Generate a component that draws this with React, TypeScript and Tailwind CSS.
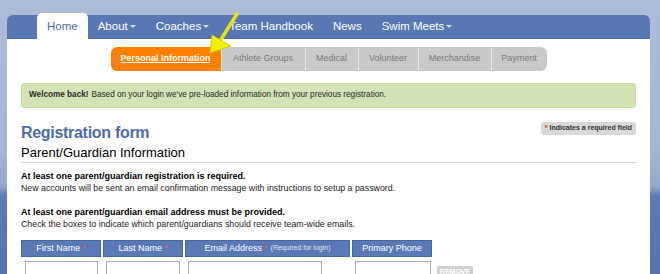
import React from "react";

const Caret = () => (
  <span className="inline-block ml-[2px] align-middle w-0 h-0 border-l-[3px] border-r-[3px] border-t-[3px] border-l-transparent border-r-transparent border-t-[#d3ddf0] relative top-[-1px]" />
);

export default function App() {
  const navItems: { label: string; caret?: boolean }[] = [
    { label: "About", caret: true },
    { label: "Coaches", caret: true },
    { label: "Team Handbook" },
    { label: "News" },
    { label: "Swim Meets", caret: true },
  ];
  const tabs = [
    { label: "Personal Information", w: "w-[110px]" },
    { label: "Athlete Groups", w: "w-[84px]" },
    { label: "Medical", w: "w-[53px]" },
    { label: "Volunteer", w: "w-[60px]" },
    { label: "Merchandise", w: "w-[73px]" },
    { label: "Payment", w: "w-[56px]" },
  ];
  return (
    <div
      className="relative w-[660px] h-[274px] overflow-hidden bg-[linear-gradient(180deg,#aebcd9_0px,#a4b5d5_150px,#94a9ce_186px,#5b7bb6_196px,#5575b2_274px)]"
      style={{ fontFamily: '"Liberation Sans", Arial, sans-serif' }}
    >
      <div className="ml-[7px] w-[643px] mt-[13px]">
        {/* Top nav */}
        <div className="relative h-[26px]">
          <div className="absolute left-0 right-0 top-[2px] h-[24px] bg-[#5878b4] rounded-t-[6px] border-b border-[#4a6aa6]" />
          <div className="relative flex h-[26px] pl-[30px] text-[11.5px] text-white">
            <div className="bg-white rounded-t-[5px] h-[26px] px-[10px] flex items-center text-[#4d6ca9] pt-[2px]">
              Home
            </div>
            {navItems.map((n) => (
              <div key={n.label} className="px-[10px] flex items-center pt-[2px] whitespace-nowrap">
                {n.label}
                {n.caret && <Caret />}
              </div>
            ))}
          </div>
        </div>

        {/* Panel body */}
        <div className="bg-white px-[14px] pb-[40px]">
          {/* Sub tabs */}
          <div className="flex justify-center pt-[8px]">
            {tabs.map((t, i) => (
              <div
                key={t.label}
                className={
                  i === 0
                    ? `${t.w} h-[24px] flex items-center justify-center bg-[#ff8000] text-white font-bold underline text-[9px] rounded-l-[6px]`
                    : i === tabs.length - 1
                    ? `${t.w} h-[24px] flex items-center justify-center bg-[#c9c9c9] text-[#7b7b7b] text-[9px] border-l border-[#e4e4e4] rounded-r-[6px]`
                    : `${t.w} h-[24px] flex items-center justify-center bg-[#c9c9c9] text-[#7b7b7b] text-[9px] border-l border-[#e4e4e4]`
                }
              >
                {t.label}
              </div>
            ))}
          </div>

          {/* Alert */}
          <div className="mt-[12px] h-[25px] rounded-[3px] bg-[#d3e3b6] border border-[#c8dca6] flex items-center px-[7px] text-[8.2px] text-[#2a2a2a]">
            <span className="font-bold mr-[3px]">Welcome back!</span>
            Based on your login we've pre-loaded information from your previous registration.
          </div>

          {/* Heading */}
          <div className="flex justify-between items-start mt-[16px]">
            <div className="text-[16px] leading-[18px] font-bold text-[#4b6bab] tracking-[-0.3px]">
              Registration form
            </div>
            <div className="-mt-[2px] bg-[#d9d9d9] rounded-[3px] px-[4px] h-[13px] flex items-center text-[7px] font-bold text-[#333]">
              <span className="text-[#e02020] mr-[2px]">*</span>Indicates a required field
            </div>
          </div>
          <div className="mt-[3px] text-[13px] leading-[16px] text-black pb-[1px] border-b border-[#d4d4d4]">
            Parent/Guardian Information
          </div>

          {/* Paragraphs */}
          <div className="mt-[7px] text-[8.8px] leading-[12px] text-[#222]">
            <div className="font-bold text-black text-[9px]">At least one parent/guardian registration is required.</div>
            <div>New accounts will be sent an email confirmation message with instructions to setup a password.</div>
            <div className="h-[12px]" />
            <div className="font-bold text-black text-[9px]">At least one parent/guardian email address must be provided.</div>
            <div>Check the boxes to indicate which parent/guardians should receive team-wide emails.</div>
          </div>

          {/* Table */}
          <div className="mt-[10px] flex gap-[2px] text-[9px] text-white">
            <div className="w-[80px] h-[17px] bg-[#5a7ab6] border border-[#4466a3] flex items-center justify-center">
              First Name<span className="text-[#ff5050] ml-[2px]">*</span>
            </div>
            <div className="w-[80px] h-[17px] bg-[#5a7ab6] border border-[#4466a3] flex items-center justify-center">
              Last Name<span className="text-[#ff5050] ml-[2px]">*</span>
            </div>
            <div className="w-[165px] h-[17px] bg-[#5a7ab6] border border-[#4466a3] flex items-center justify-center">
              Email Address<span className="text-[#ff5050] ml-[2px]">*</span>
              <span className="text-[7px] text-[#dfe6f3] ml-[3px]">(Required for login)</span>
            </div>
            <div className="w-[80px] h-[17px] bg-[#5a7ab6] border border-[#4466a3] flex items-center justify-center">
              Primary Phone
            </div>
          </div>
          <div className="flex gap-[2px] mt-[4px]">
            <div className="w-[80px] pl-[4px]">
              <div className="w-[73px] h-[20px] border border-[#a9a9a9] bg-white" />
            </div>
            <div className="w-[80px] pl-[3px]">
              <div className="w-[74px] h-[20px] border border-[#a9a9a9] bg-white" />
            </div>
            <div className="w-[165px] pl-[3px]">
              <div className="w-[134px] h-[20px] border border-[#a9a9a9] bg-white" />
            </div>
            <div className="w-[80px] pl-[3px]">
              <div className="w-[76px] h-[20px] border border-[#a9a9a9] bg-white" />
            </div>
            <div className="ml-[3px] mt-[5px] w-[36px] h-[12px] bg-[#d0d0d0] rounded-[2px] text-white text-[7px] font-bold flex items-center justify-center">
              REMOVE
            </div>
          </div>
        </div>
      </div>

      {/* Yellow arrow */}
      <svg className="absolute left-0 top-0" width="660" height="274" viewBox="0 0 660 274">
        <path d="M237 14 L220 41" stroke="#e6e600" strokeWidth="3.5" strokeLinecap="round" />
        <polygon points="210,53 212,35 231,46" fill="#f2f200" stroke="#c9c900" strokeWidth="0.8" strokeLinejoin="round" />
      </svg>
    </div>
  );
}
